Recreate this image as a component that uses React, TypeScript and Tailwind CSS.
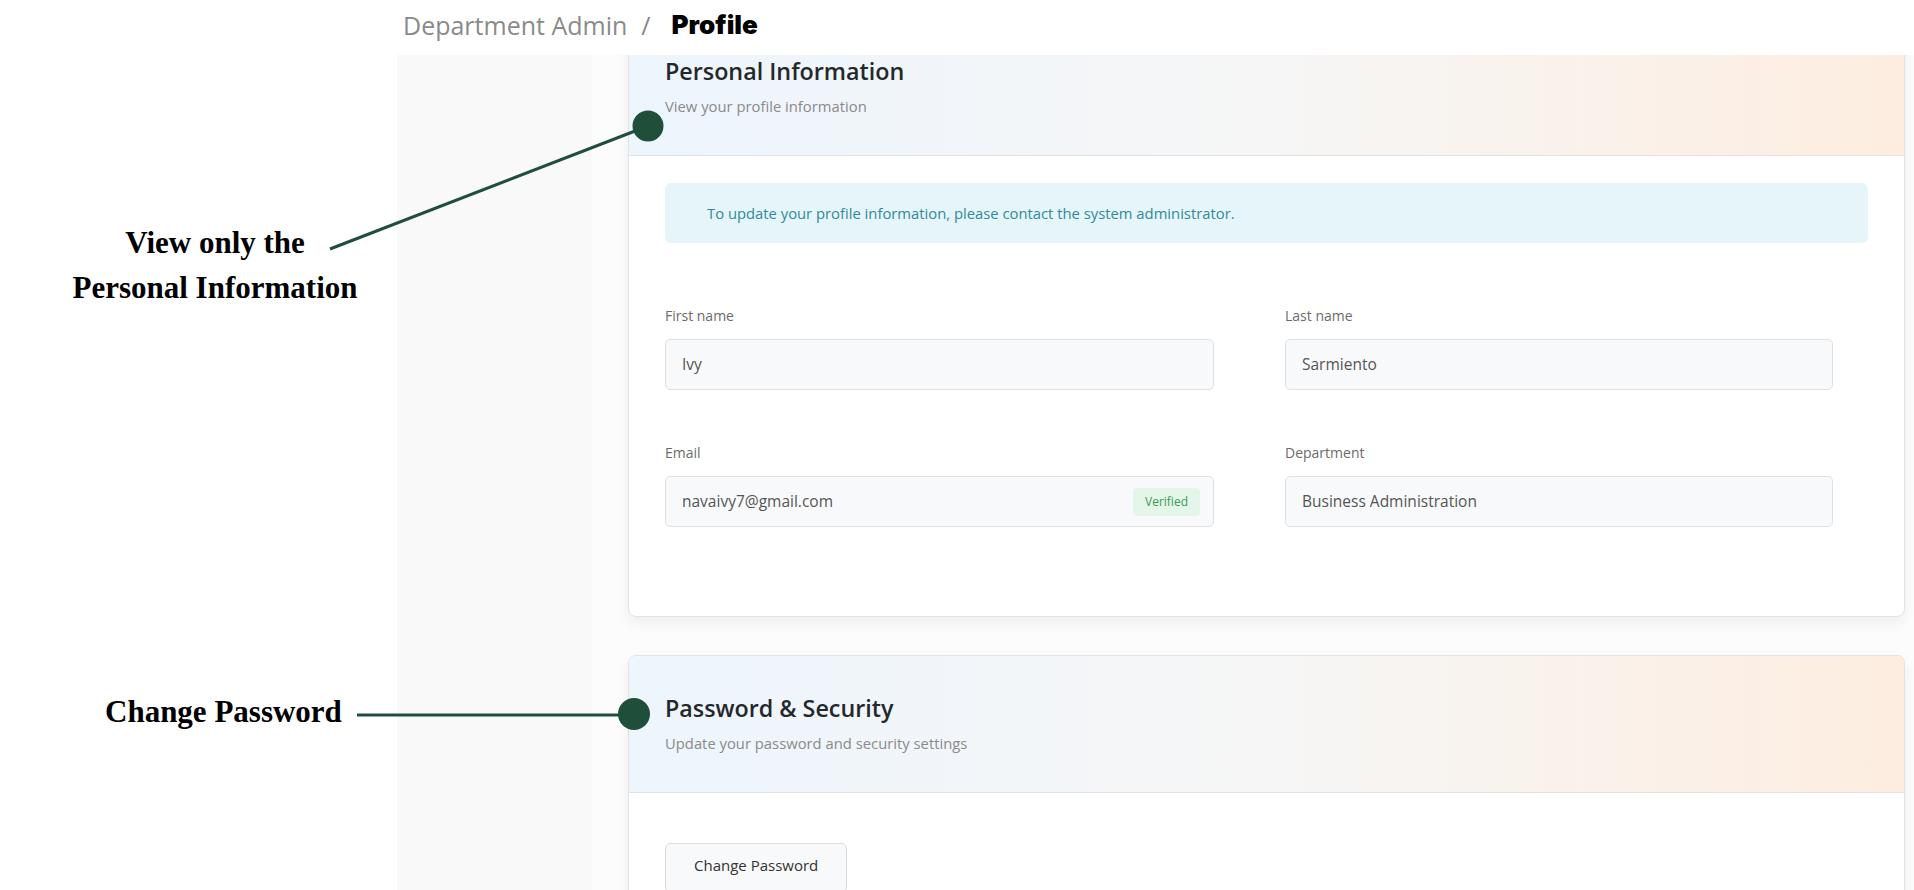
import { type FC } from 'react';

const Field: FC<{ label: string; value: string; verified?: boolean }> = ({ label, value, verified }) => (
  <div>
    <label className="block text-sm leading-5 text-[#6b6b6b]">{label}</label>
    <div className="mt-[13px] flex h-[51px] items-center justify-between rounded-[5px] border border-[#dee2e6] bg-[#f8f9fa] pl-4 pr-[13px] text-[15.5px] text-[#555]">
      <span>{value}</span>
      {verified && (
        <span className="flex h-[28px] items-center rounded-[4px] bg-[#e4f5e9] px-[12px] text-xs text-[#3a9b52]">
          Verified
        </span>
      )}
    </div>
  </div>
);

const CardHeader: FC<{ title: string; subtitle: string }> = ({ title, subtitle }) => (
  <div className="border-b border-[#e2e2e2] bg-linear-to-r from-[#edf5fd] via-[#f6f6f6] to-[#fdede0] px-9 pt-9 pb-[39px]">
    <h2 className="text-[23.3px] leading-8 font-semibold text-[#25282b]">{title}</h2>
    <p className="mt-[9px] text-[14.8px] leading-5 text-[#8a8a8a]">{subtitle}</p>
  </div>
);

const App: FC = () => {
  return (
    <div className="relative flex h-[890px] w-[1914px] overflow-hidden bg-white">
      {/* annotation column */}
      <div className="w-[397px] shrink-0 font-['Liberation_Serif',serif] text-[31px] leading-[45px] font-bold text-black">
        <div className="w-[430px] pt-[220px] text-center">
          View only the
          <br />
          Personal Information
        </div>
        <div className="mt-[379px] pl-[105px]">Change Password</div>
      </div>

      {/* page */}
      <div className="flex flex-1 flex-col font-['Open_Sans',sans-serif]">
        <div className="flex h-[55px] shrink-0 items-start bg-white pt-[8px] pl-[6px] text-[25px] leading-[34px]">
          <span className="text-[#8a8a8a]">Department Admin</span>
          <span className="ml-[14px] text-[#8a8a8a]">/</span>
          <span className="ml-[21px] font-['Inter',sans-serif] text-[26px] font-black text-black">Profile</span>
        </div>

        <div className="flex flex-1 overflow-hidden">
          <div className="w-[195px] shrink-0 bg-[#f9f9f9]" />
          <div className="flex-1 bg-[#fcfcfc] pr-[9px] pl-9">
            {/* Personal Information */}
            <div className="-mt-[37px] overflow-hidden rounded-lg border border-[#e3e3e3] bg-white shadow-[0_6px_14px_rgba(0,0,0,0.06)]">
              <CardHeader title="Personal Information" subtitle="View your profile information" />
              <div className="px-9 pt-[27px] pb-[89px]">
                <div className="flex h-[60px] items-center rounded-md bg-[#e6f5f9] pl-[42px] text-[14.8px] text-[#2f8a9c]">
                  To update your profile information, please contact the system administrator.
                </div>
                <div className="mt-[63px] grid grid-cols-[549px_548px] gap-x-[71px] gap-y-[53px]">
                  <Field label="First name" value="Ivy" />
                  <Field label="Last name" value="Sarmiento" />
                  <Field label="Email" value="navaivy7@gmail.com" verified />
                  <Field label="Department" value="Business Administration" />
                </div>
              </div>
            </div>

            {/* Password & Security */}
            <div className="mt-[38px] overflow-hidden rounded-lg border border-[#e3e3e3] bg-white shadow-[0_6px_14px_rgba(0,0,0,0.06)]">
              <CardHeader title="Password & Security" subtitle="Update your password and security settings" />
              <div className="px-9 pt-[50px] pb-8">
                <button className="rounded-md border border-[#dcdcdc] bg-[#f8f9fa] px-[28px] pt-[11px] pb-[17px] text-[15px] leading-5 font-medium text-[#333]">
                  Change Password
                </button>
              </div>
            </div>
          </div>
        </div>
      </div>

      {/* callout lines */}
      <svg className="pointer-events-none absolute inset-0" width="1914" height="890">
        <line x1="330" y1="249" x2="648" y2="126" stroke="#1f4e3b" strokeWidth="3" />
        <circle cx="648" cy="126" r="15.5" fill="#1f4e3b" />
        <line x1="357" y1="715" x2="634" y2="715" stroke="#1f4e3b" strokeWidth="3" />
        <circle cx="634" cy="714" r="16" fill="#1f4e3b" />
      </svg>
    </div>
  );
};

export default App;
